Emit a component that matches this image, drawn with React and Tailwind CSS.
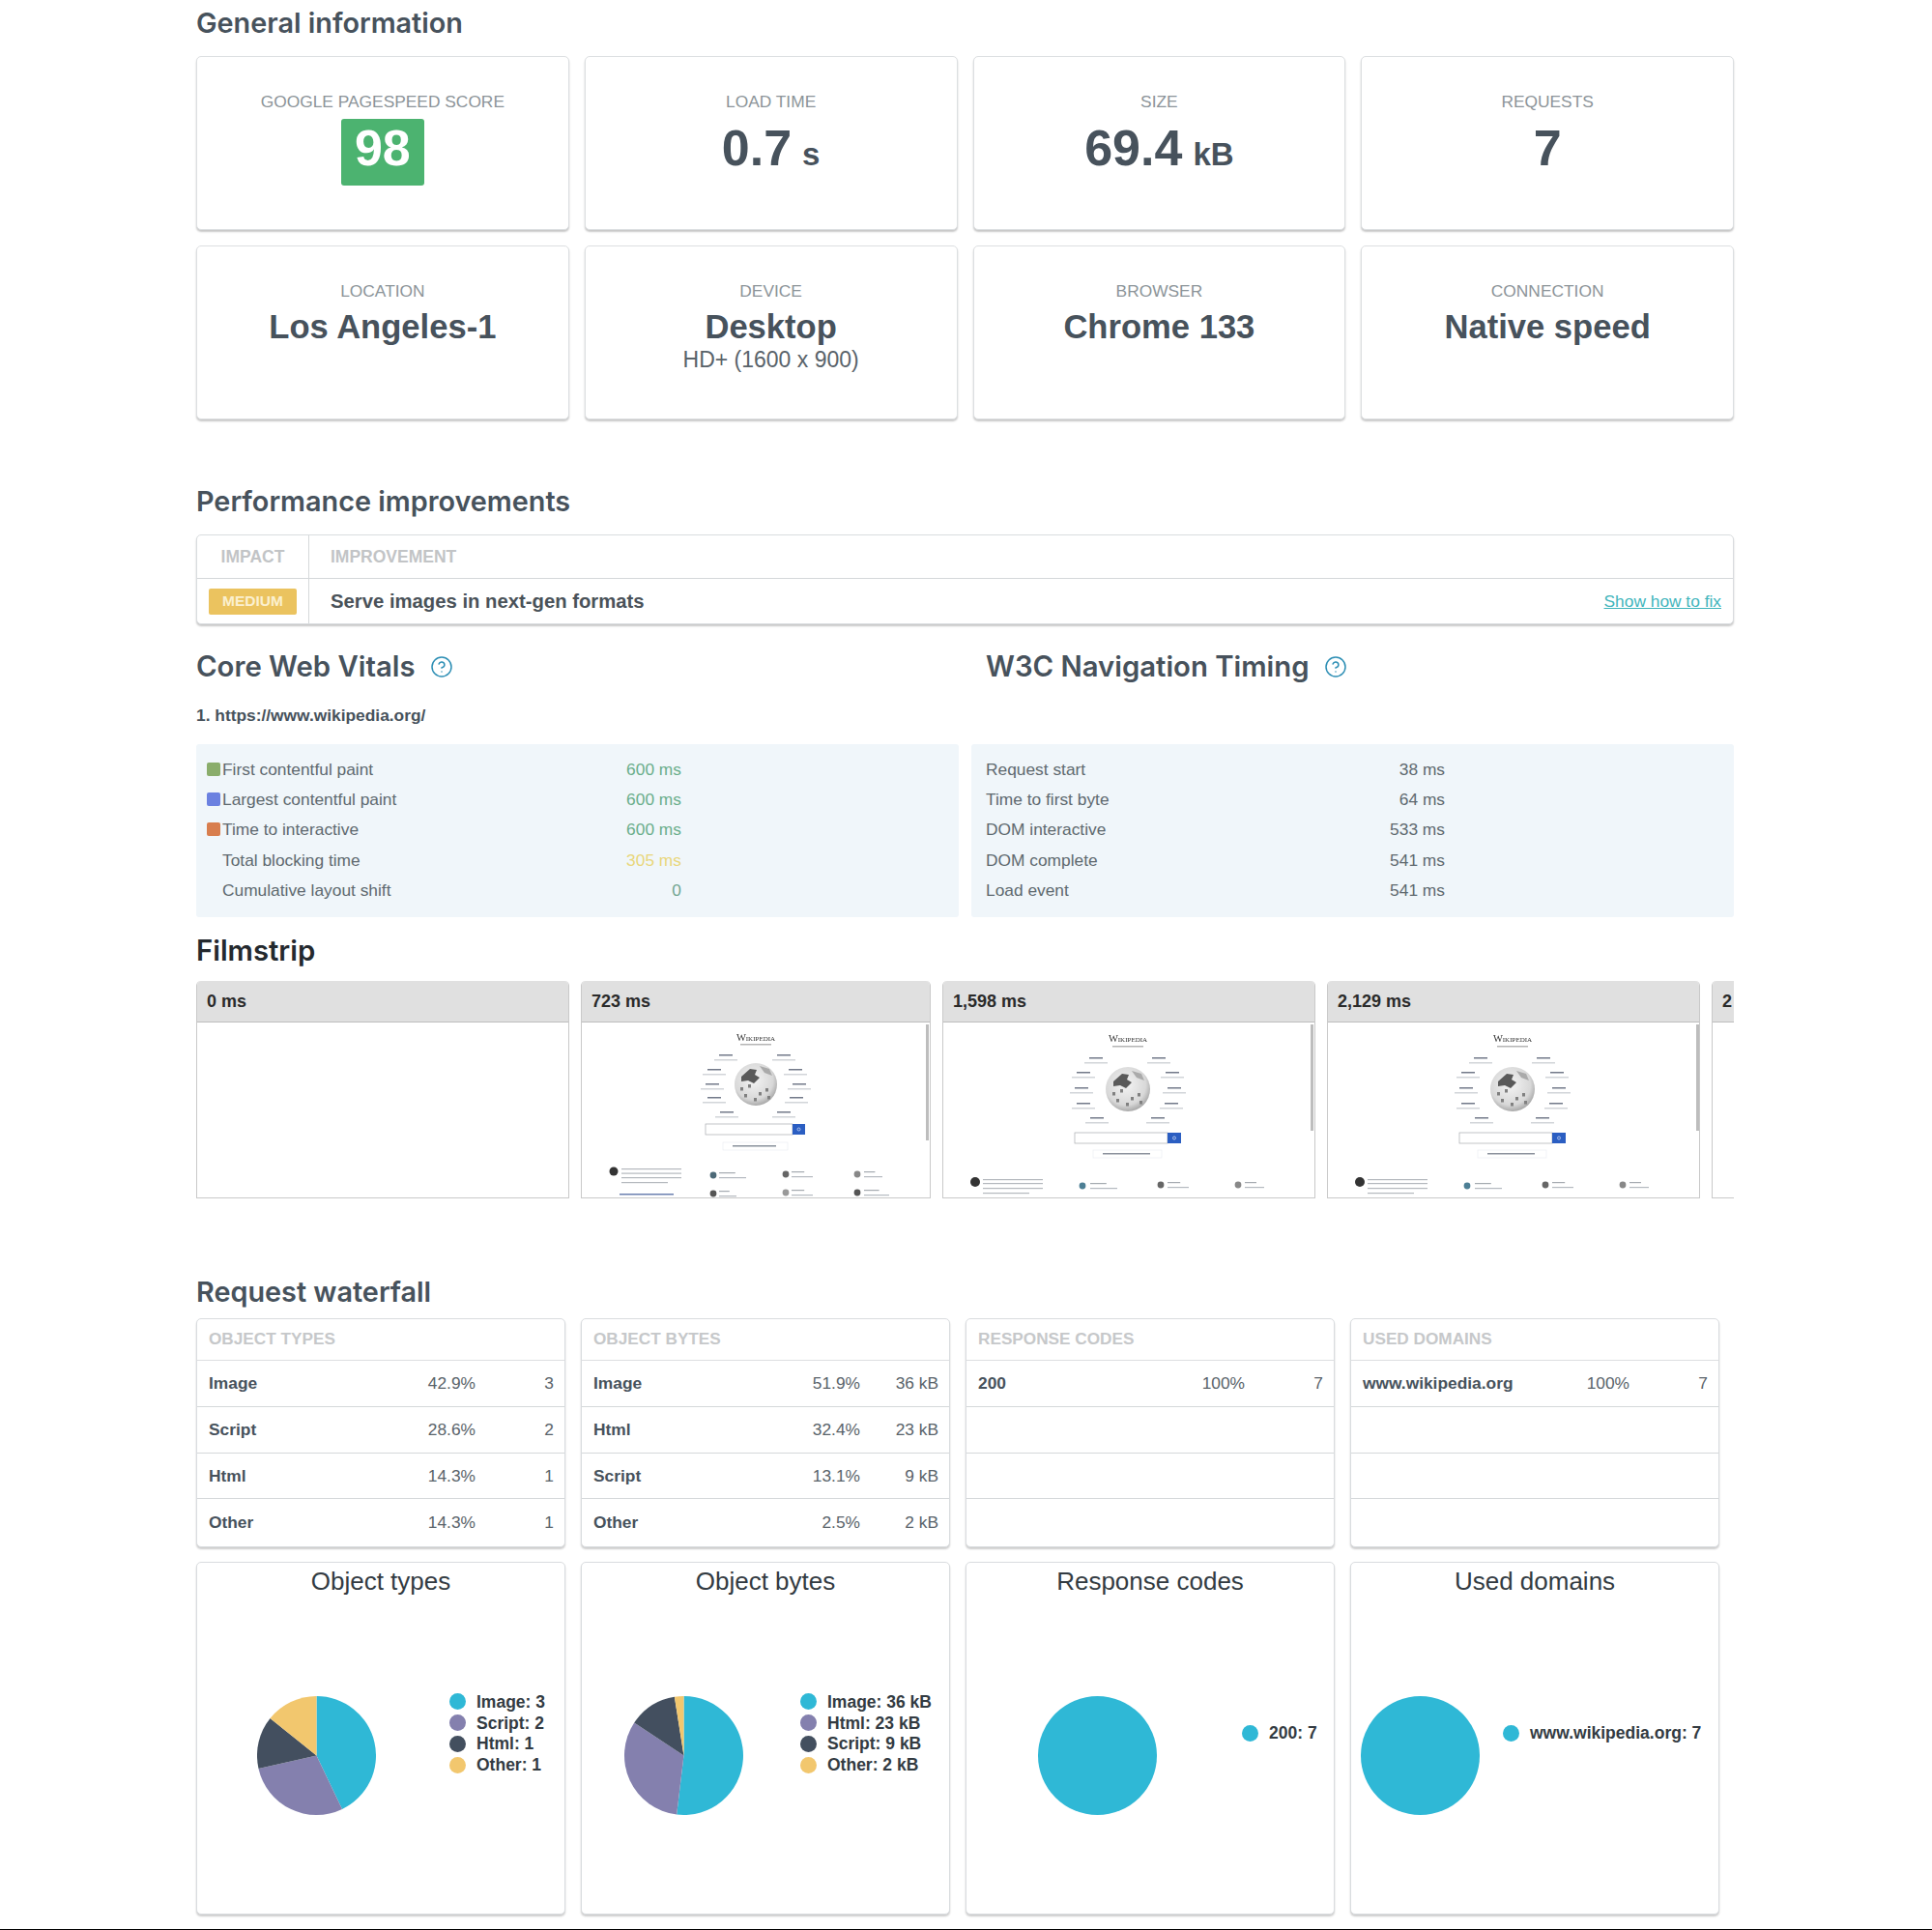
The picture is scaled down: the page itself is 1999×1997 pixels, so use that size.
import React from "react";
import { CircleHelp } from "lucide-react";

const sans = "font-['Liberation_Sans',Arial,sans-serif]";
const heading = "font-['Inter',sans-serif] font-semibold text-[#47525c] leading-none";

function StatCard({ label, children }) {
  return (
    <div className="h-[180px] rounded-[5px] border border-[#dcdfe1] bg-white pt-[36px] text-center shadow-[0_2px_2px_rgba(0,0,0,0.22)]">
      <div className="text-[17.35px] leading-[20px] text-[#8c9499]">{label}</div>
      {children}
    </div>
  );
}

function BigValue({ value, unit }) {
  return (
    <div className="mt-[8px] text-[52px] font-bold leading-[60px] text-[#47525c]">
      {value}
      {unit && <span className="ml-[11px] text-[33px]">{unit}</span>}
    </div>
  );
}

function TextValue({ value, sub }) {
  return (
    <div>
      <div className="mt-[2px] text-[34.6px] font-bold leading-[50px] text-[#47525c]">{value}</div>
      {sub && <div className="-mt-[4px] text-[23px] leading-[26px] text-[#59636a]">{sub}</div>}
    </div>
  );
}

function Metrics({ rows, markers, valueWidth }) {
  return (
    <div className="h-[179px] rounded-[3px] bg-[#f0f6fa] pt-[10px] text-[17.35px] text-[#5e696f]">
      {rows.map((r) => (
        <div key={r[0]} className="flex h-[31.3px] items-center pl-[11px]">
          {markers && (
            <span className={`mr-[2px] h-[14px] w-[14px] shrink-0 rounded-[2px] ${r[3] || "bg-transparent"}`} />
          )}
          {!markers && <span className="w-[4px] shrink-0" />}
          <span className={valueWidth}>{r[0]}</span>
          <span className={`w-[100px] text-right ${r[2] || ""}`}>{r[1]}</span>
        </div>
      ))}
    </div>
  );
}

const DARK = "#737a8a";
const LIGHT = "#d2d5d9";

function WikiThumb({ w, c }) {
  const bar = (x, y, width, fill, h = 1.5) => <rect x={x} y={y} width={width} height={h} fill={fill} />;
  return (
    <svg width={w} height={181} viewBox={`0 0 ${w} 181`} className="block blur-[0.5px]">
      <defs>
        <radialGradient id={`globe${w}`} cx="45%" cy="40%" r="65%">
          <stop offset="0%" stopColor="#f4f4f4" />
          <stop offset="70%" stopColor="#d8d8d8" />
          <stop offset="100%" stopColor="#9a9a9a" />
        </radialGradient>
      </defs>
      <text x={c.title[0]} y={c.title[1] + 3} textAnchor="middle" fontFamily="Liberation Serif, serif" fontSize="10.5" fill="#333" style={{ fontVariant: "small-caps" }}>
        Wikipedia
      </text>
      {bar(c.title[0] - 16, c.sub, 32, "#b5b5b5", 1.5)}
      <circle cx={c.globe[0]} cy={c.globe[1]} r={c.globe[2]} fill={`url(#globe${w})`} />
      <path
        d={`M${c.globe[0] - 15} ${c.globe[1] - 8} l9 -8 l7 1 l-2 5 l5 3 l-6 6 l-6 -3 l-7 1z`}
        fill="#5a5a5a"
      />
      <path d={`M${c.globe[0] + 4} ${c.globe[1] - 19} l10 3 l3 7 l-8 -3z`} fill="#aaa" />
      {[[-8, 0], [3, 8], [10, 4], [-12, 10], [-2, 14], [12, 12], [-16, 3]].map(([dx, dy], i) => (
        <rect key={i} x={c.globe[0] + dx} y={c.globe[1] + dy} width="3" height="3.5" fill="#808080" />
      ))}
      {c.langs.map(([x, y], i) => (
        <g key={i}>
          {bar(x - 7, y, 14, DARK)}
          {bar(x - 12, y + 5, 24, LIGHT)}
        </g>
      ))}
      <rect x={c.search[0]} y={c.search[1]} width={c.search[2] - c.search[0]} height={c.search[3] - c.search[1]} fill="#fff" stroke="#a8abb0" strokeWidth="0.7" />
      <rect x={c.search[2]} y={c.search[1]} width={c.search[4] - c.search[2]} height={c.search[3] - c.search[1]} fill="#2b5ec2" />
      <circle cx={(c.search[2] + c.search[4]) / 2} cy={(c.search[1] + c.search[3]) / 2} r="1.5" fill="none" stroke="#dfe8fa" strokeWidth="0.7" />
      <rect x={c.lang[0]} y={c.lang[1]} width={c.lang[2] - c.lang[0]} height={c.lang[3] - c.lang[1]} fill="#fff" stroke="#eceef2" strokeWidth="0.7" />
      {bar(c.lang[0] + 10, (c.lang[1] + c.lang[3]) / 2 - 1, c.lang[2] - c.lang[0] - 22, "#8a919c")}
      <circle cx={c.foot[0]} cy={c.foot[1]} r={c.foot[2]} fill="#333" />
      {c.footLines.map((y, i) => bar(c.foot[0] + 8, y, i === 3 ? 48 : 62, "#b4b8bd", 1.2))}
      {c.items.map(([x, y, tx, tw, col], i) => (
        <g key={i}>
          <circle cx={x} cy={y} r="3.4" fill={col} />
          {bar(tx, y - 3, tw * 0.6, "#a5abb1", 1.2)}
          {bar(tx, y + 2, tw, "#b5bac0", 1.2)}
        </g>
      ))}
      {c.extra}
      <rect x={w - 4} y="2" width="3" height={c.scroll} fill="#bdbdbd" />
    </svg>
  );
}

const thumbA = {
  title: [180, 16],
  sub: 22,
  globe: [180, 64, 22],
  langs: [[149, 33], [137, 48], [135, 63], [137, 77], [150, 92], [209, 33], [221, 48], [225, 63], [222, 77], [209, 92]],
  search: [128, 105, 218, 116, 231],
  lang: [146, 124, 213, 132],
  foot: [33, 154, 4.5],
  footLines: [151, 155.5, 160, 165],
  items: [[136, 158, 142, 28, "#4d6a78"], [211, 157, 217, 22, "#666"], [285, 157, 292, 19, "#888"], [136, 177, 142, 18, "#555"], [211, 176, 217, 22, "#999"], [285, 176, 292, 26, "#555"]],
  scroll: 120,
  extra: <rect x="39" y="177" width="56" height="1.5" fill="#6a80b0" />,
};
const thumbB = {
  title: [191, 17],
  sub: 24,
  globe: [191, 69, 23],
  langs: [[158, 36], [145, 51], [143, 67], [145, 83], [159, 98], [223, 36], [237, 51], [239, 67], [236, 83], [222, 98]],
  search: [136, 114, 232, 125, 246],
  lang: [155, 132, 226, 140],
  foot: [33, 165, 5],
  footLines: [162, 166, 171, 176],
  items: [[144, 169, 152, 28, "#4d7f95"], [225, 168, 232, 22, "#666"], [305, 168, 312, 20, "#888"]],
  scroll: 110,
};

function FrameCard({ time, w, children }) {
  return (
    <div className={`shrink-0 overflow-hidden rounded-t-[5px] border-x border-b border-[#c9c9c9] bg-white ${w}`}>
      <div className="flex h-[43px] items-center border-b border-[#bdbdbd] bg-[#e0e0e0] pl-[10px] text-[18px] font-bold text-[#2a2a2a]">
        {time}
      </div>
      {children}
    </div>
  );
}

function DataTable({ title, rows }) {
  return (
    <div className="h-[237px] rounded-[5px] border border-[#d9dcdf] bg-white shadow-[0_2px_2px_rgba(0,0,0,0.2)]">
      <div className="flex h-[43px] items-center border-b border-[#dddfe1] pl-[12px] text-[17.2px] font-bold text-[#c6c8ca]">
        {title}
      </div>
      {[0, 1, 2, 3].map((i) => {
        const r = rows[i];
        return (
          <div key={i} className={`flex h-[47.75px] items-center pl-[12px] text-[17.35px] text-[#59636a] ${i < 3 ? "border-b border-[#d5d8da]" : ""}`}>
            {r && (
              <>
                <span className="w-[196px] font-bold text-[#47525c]">{r[0]}</span>
                <span className="w-[80px] text-right">{r[1]}</span>
                <span className="w-[81px] text-right">{r[2]}</span>
              </>
            )}
          </div>
        );
      })}
    </div>
  );
}

function Pie({ values }) {
  const colors = ["#2fb8d6", "#8480ae", "#434f5f", "#f2c76e"];
  const R = 61.5;
  if (values.length === 1) {
    return (
      <svg width="123" height="123" viewBox="-61.5 -61.5 123 123" className="shrink-0">
        <circle r={R} fill={colors[0]} />
      </svg>
    );
  }
  let a = 0;
  const paths = values.map((v, i) => {
    const a2 = a + (v / 100) * Math.PI * 2;
    const d = `M0 0 L${R * Math.sin(a)} ${-R * Math.cos(a)} A${R} ${R} 0 ${a2 - a > Math.PI ? 1 : 0} 1 ${R * Math.sin(a2)} ${-R * Math.cos(a2)}Z`;
    a = a2;
    return <path key={i} d={d} fill={colors[i]} />;
  });
  return (
    <svg width="123" height="123" viewBox="-61.5 -61.5 123 123" className="shrink-0">
      {paths}
    </svg>
  );
}

function PieCard({ title, values, legend, pieLeft, legendGap }) {
  const dots = ["bg-[#2fb8d6]", "bg-[#8480ae]", "bg-[#434f5f]", "bg-[#f2c76e]"];
  return (
    <div className="h-[365px] rounded-[5px] border border-[#d9dcdf] bg-white shadow-[0_2px_2px_rgba(0,0,0,0.2)]">
      <div className="flex h-[38px] items-center justify-center text-[26px] text-[#333b42]">{title}</div>
      <div className={`flex h-[322px] items-center ${pieLeft}`}>
        <Pie values={values} />
        <div className={`mb-[45px] ${legendGap}`}>
          {legend.map((l, i) => (
            <div key={l} className="flex h-[21.7px] items-center text-[17.5px] font-bold text-[#333b42]">
              <span className={`mr-[11px] h-[17px] w-[17px] rounded-full ${dots[i]}`} />
              {l}
            </div>
          ))}
        </div>
      </div>
    </div>
  );
}

export default function App() {
  return (
    <div className={`${sans} h-[1997px] w-[1999px] overflow-hidden bg-white`}>
      <div className="ml-[203px] w-[1591px]">
        <h2 className={`${heading} flex h-[48px] items-center text-[28.8px]`}>General information</h2>
        <div className="mt-[10px] grid grid-cols-4 gap-x-[16px] gap-y-[16px]">
          <StatCard label="GOOGLE PAGESPEED SCORE">
            <div className="mx-auto mt-[8px] h-[69px] w-[86px] rounded-[3px] bg-[#4cb370] text-[52px] font-bold leading-[60px] text-white">98</div>
          </StatCard>
          <StatCard label="LOAD TIME"><BigValue value="0.7" unit="s" /></StatCard>
          <StatCard label="SIZE"><BigValue value="69.4" unit="kB" /></StatCard>
          <StatCard label="REQUESTS"><BigValue value="7" /></StatCard>
          <StatCard label="LOCATION"><TextValue value="Los Angeles-1" /></StatCard>
          <StatCard label="DEVICE"><TextValue value="Desktop" sub="HD+ (1600 x 900)" /></StatCard>
          <StatCard label="BROWSER"><TextValue value="Chrome 133" /></StatCard>
          <StatCard label="CONNECTION"><TextValue value="Native speed" /></StatCard>
        </div>

        <h2 className={`${heading} mt-[65px] flex h-[40px] items-center text-[28.8px]`}>Performance improvements</h2>
        <div className="mt-[14px] rounded-[5px] border border-[#d9dcdf] bg-white shadow-[0_2px_2px_rgba(0,0,0,0.22)]">
          <div className="grid h-[45px] grid-cols-[116px_1fr] border-b border-[#d5d8da] text-[17.5px] font-bold text-[#c2c4c6]">
            <div className="flex items-center justify-center border-r border-[#d5d8da]">IMPACT</div>
            <div className="flex items-center pl-[22px]">IMPROVEMENT</div>
          </div>
          <div className="grid h-[46px] grid-cols-[116px_1fr]">
            <div className="flex items-center justify-center border-r border-[#d5d8da]">
              <span className="flex h-[27px] w-[91px] items-center justify-center rounded-[2px] bg-[#ebc35f] text-[15.5px] font-bold text-[#fbf0cf]">MEDIUM</span>
            </div>
            <div className="flex items-center justify-between pl-[22px] pr-[12px]">
              <span className="text-[20.3px] font-bold text-[#4a5259]">Serve images in next-gen formats</span>
              <a className="text-[17.35px] text-[#3fb5bc] underline">Show how to fix</a>
            </div>
          </div>
        </div>

        <div className="mt-[24px] grid h-[40px] grid-cols-[817px_1fr]">
          <div className={`${heading} flex items-center text-[29.3px]`}>
            Core Web Vitals
            <CircleHelp className="ml-[15px] text-[#2e8fb5]" size={24} strokeWidth={1.5} />
          </div>
          <div className={`${heading} flex items-center text-[29.3px]`}>
            W3C Navigation Timing
            <CircleHelp className="ml-[15px] text-[#2e8fb5]" size={24} strokeWidth={1.5} />
          </div>
        </div>
        <div className="mt-[19px] text-[17.35px] font-bold leading-[22px] text-[#47525c]">1. https://www.wikipedia.org/</div>
        <div className="mt-[19px] grid grid-cols-2 gap-x-[13px]">
          <Metrics
            markers
            valueWidth="w-[375px]"
            rows={[
              ["First contentful paint", "600 ms", "text-[#6aae8b]", "bg-[#8aad6b]"],
              ["Largest contentful paint", "600 ms", "text-[#6aae8b]", "bg-[#6b81e0]"],
              ["Time to interactive", "600 ms", "text-[#6aae8b]", "bg-[#d87e4e]"],
              ["Total blocking time", "305 ms", "text-[#e9d67a]"],
              ["Cumulative layout shift", "0", "text-[#72a590]"],
            ]}
          />
          <Metrics
            valueWidth="w-[375px]"
            rows={[
              ["Request start", "38 ms"],
              ["Time to first byte", "64 ms"],
              ["DOM interactive", "533 ms"],
              ["DOM complete", "541 ms"],
              ["Load event", "541 ms"],
            ]}
          />
        </div>

        <h2 className="mt-[15px] flex h-[40px] items-center font-['Inter',sans-serif] text-[29.3px] font-semibold leading-none text-[#24292e]">Filmstrip</h2>
        <div className="mt-[11px] flex h-[225px] gap-x-[12px] overflow-hidden">
          <FrameCard time="0 ms" w="w-[386px]">
            <div className="h-[181px]" />
          </FrameCard>
          <FrameCard time="723 ms" w="w-[362px]"><WikiThumb w={360} c={thumbA} /></FrameCard>
          <FrameCard time="1,598 ms" w="w-[386px]"><WikiThumb w={384} c={thumbB} /></FrameCard>
          <FrameCard time="2,129 ms" w="w-[386px]"><WikiThumb w={385} c={thumbB} /></FrameCard>
          <FrameCard time="2" w="w-[386px]"><div className="h-[181px]" /></FrameCard>
        </div>

        <h2 className={`${heading} mt-[77px] flex h-[40px] items-center text-[28.8px]`}>Request waterfall</h2>
        <div className="mt-[7px] grid w-[1576px] grid-cols-4 gap-x-[16px]">
          <DataTable title="OBJECT TYPES" rows={[["Image", "42.9%", "3"], ["Script", "28.6%", "2"], ["Html", "14.3%", "1"], ["Other", "14.3%", "1"]]} />
          <DataTable title="OBJECT BYTES" rows={[["Image", "51.9%", "36 kB"], ["Html", "32.4%", "23 kB"], ["Script", "13.1%", "9 kB"], ["Other", "2.5%", "2 kB"]]} />
          <DataTable title="RESPONSE CODES" rows={[["200", "100%", "7"]]} />
          <DataTable title="USED DOMAINS" rows={[["www.wikipedia.org", "100%", "7"]]} />
        </div>
        <div className="mt-[15px] grid w-[1576px] grid-cols-4 gap-x-[16px]">
          <PieCard title="Object types" values={[42.9, 28.6, 14.25, 14.25]} legend={["Image: 3", "Script: 2", "Html: 1", "Other: 1"]} pieLeft="pl-[62px]" legendGap="ml-[76px]" />
          <PieCard title="Object bytes" values={[51.9, 32.4, 13.2, 2.5]} legend={["Image: 36 kB", "Html: 23 kB", "Script: 9 kB", "Other: 2 kB"]} pieLeft="pl-[44px]" legendGap="ml-[59px]" />
          <PieCard title="Response codes" values={[100]} legend={["200: 7"]} pieLeft="pl-[74px]" legendGap="ml-[88px]" />
          <PieCard title="Used domains" values={[100]} legend={["www.wikipedia.org: 7"]} pieLeft="pl-[10px]" legendGap="ml-[24px]" />
        </div>
      </div>
      <div className="mt-[15px] h-[1px] w-full bg-black" />
    </div>
  );
}
